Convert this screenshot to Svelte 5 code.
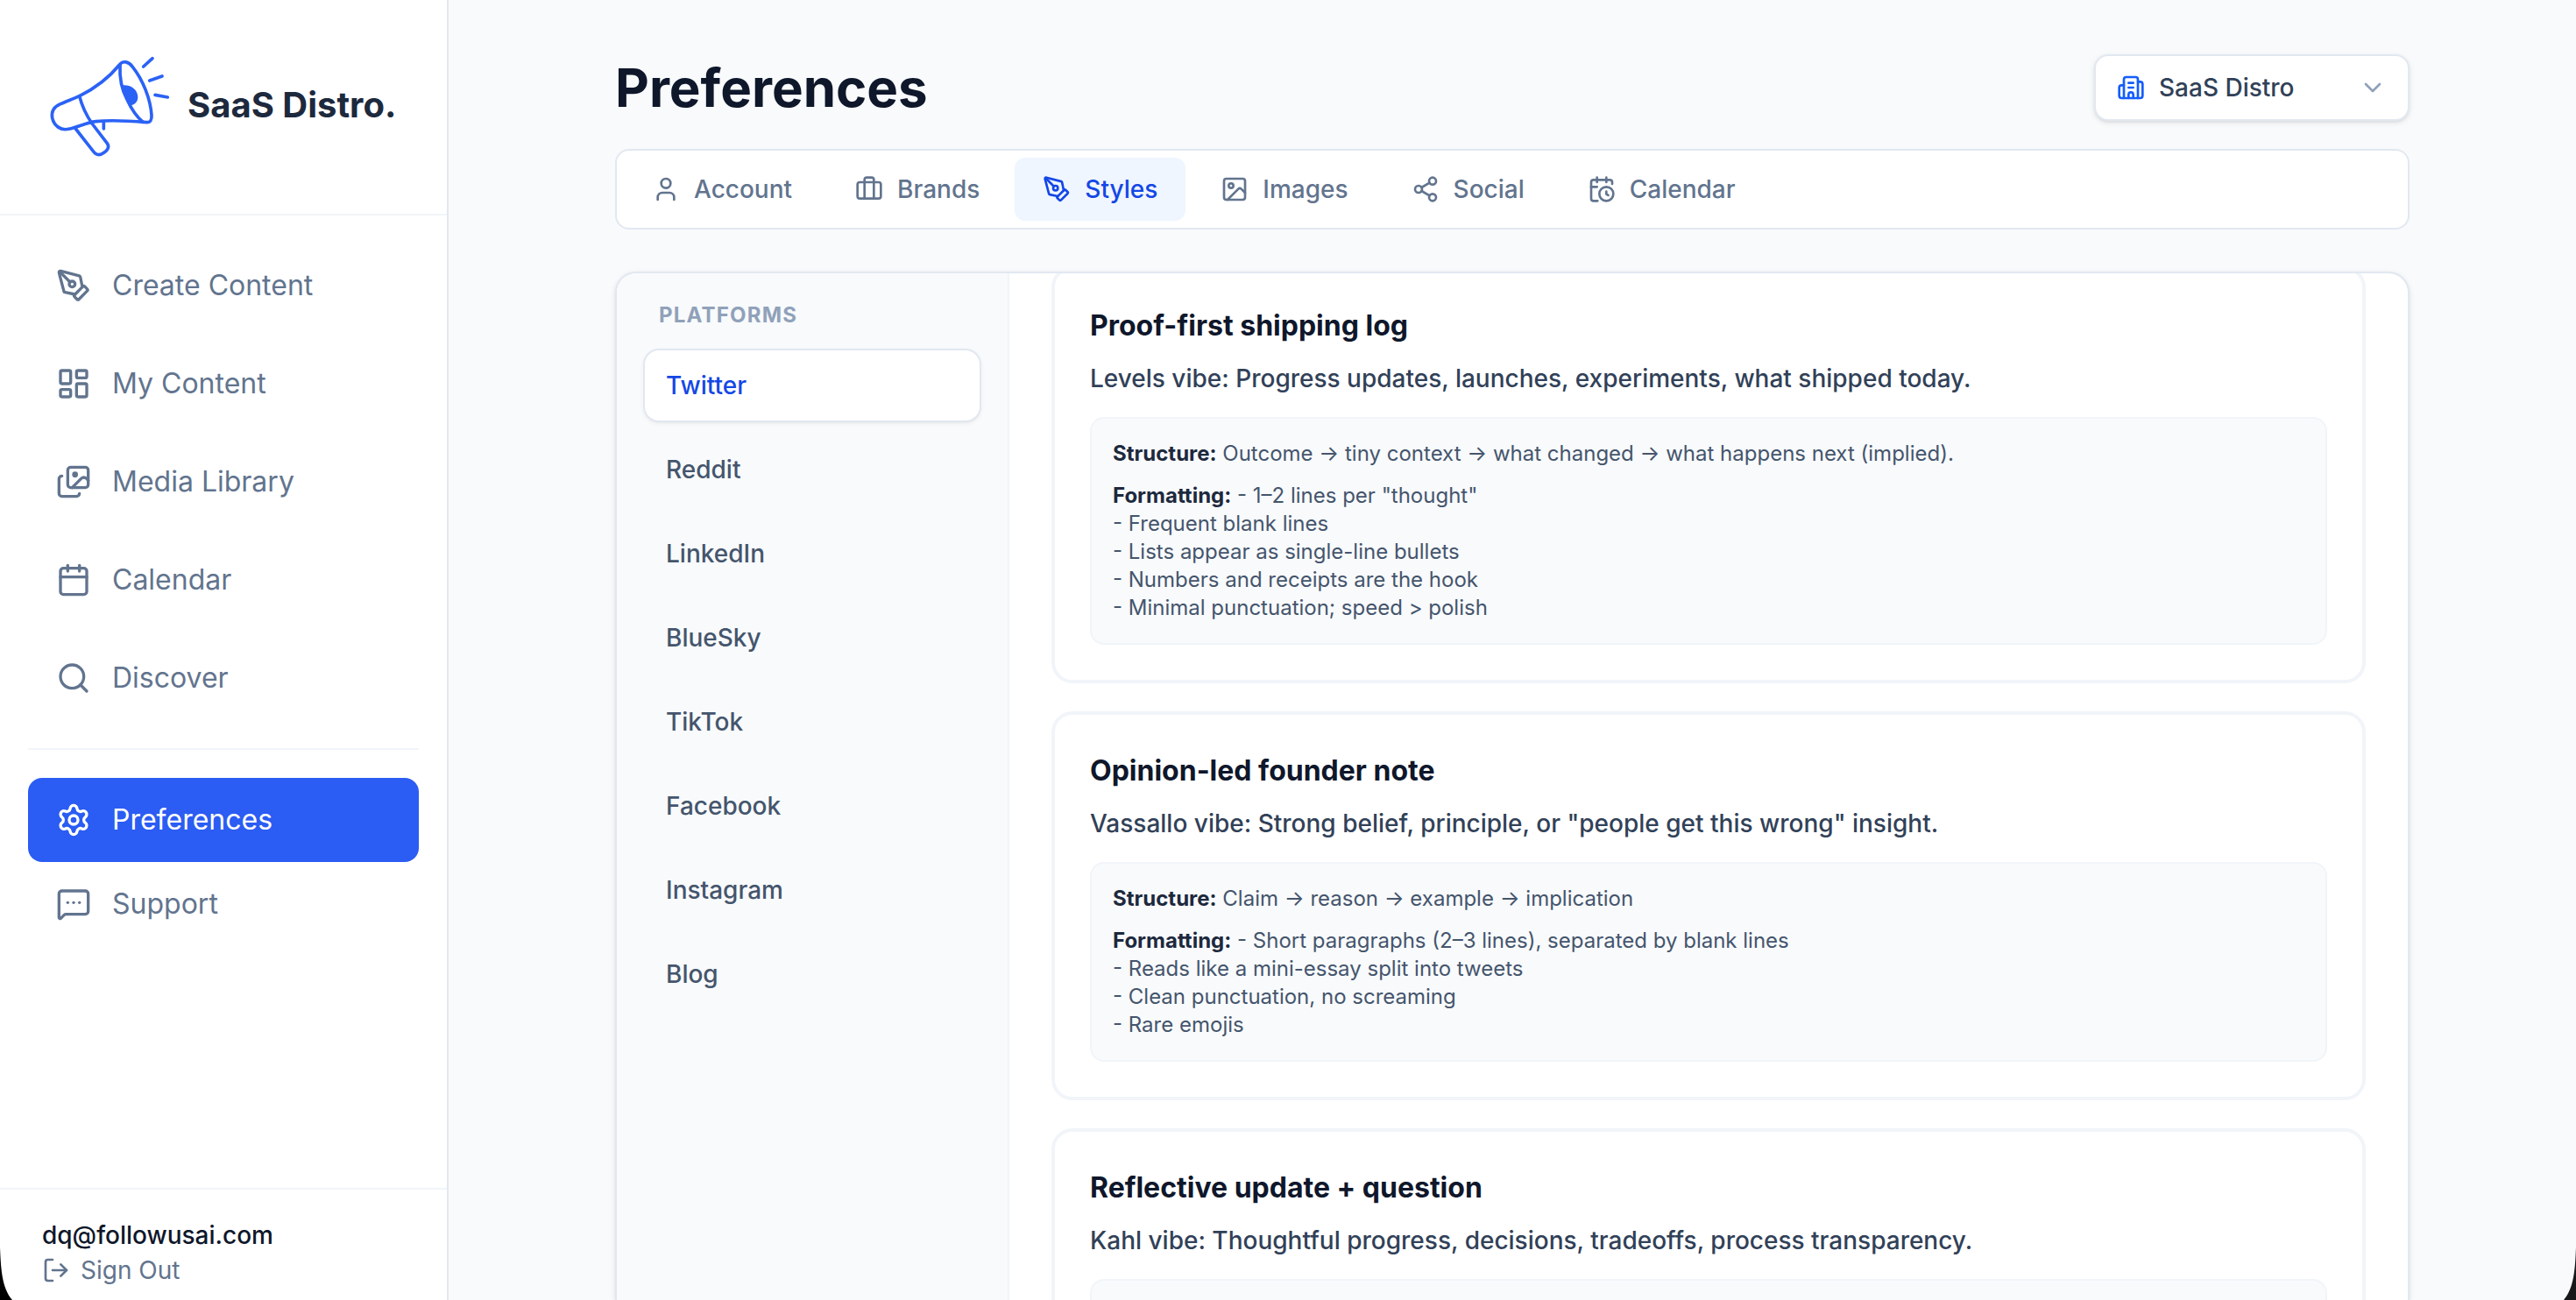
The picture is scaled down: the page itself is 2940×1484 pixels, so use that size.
<script>
    import { onMount } from 'svelte';

    const icons = {
        pen: '<path d="M15.707 21.293a1 1 0 0 1-1.414 0l-1.586-1.586a1 1 0 0 1 0-1.414l5.586-5.586a1 1 0 0 1 1.414 0l1.586 1.586a1 1 0 0 1 0 1.414z"/><path d="m18 13-1.375-6.874a1 1 0 0 0-.746-.776L3.235 2.028a1 1 0 0 0-1.207 1.207L5.35 15.879a1 1 0 0 0 .776.746L13 18"/><path d="m2.3 2.3 7.286 7.286"/><circle cx="11" cy="11" r="2"/>',
        dashboard: '<rect width="7" height="9" x="3" y="3" rx="1"/><rect width="7" height="5" x="14" y="3" rx="1"/><rect width="7" height="9" x="14" y="12" rx="1"/><rect width="7" height="5" x="3" y="16" rx="1"/>',
        images: '<path d="m22 11-1.296-1.296a2.4 2.4 0 0 0-3.408 0L11 16"/><path d="M4 8a2 2 0 0 0-2 2v10a2 2 0 0 0 2 2h10a2 2 0 0 0 2-2"/><circle cx="13" cy="7" r="1" fill="currentColor"/><rect x="8" y="2" width="14" height="14" rx="2"/>',
        calendar: '<path d="M8 2v4"/><path d="M16 2v4"/><rect width="18" height="18" x="3" y="4" rx="2"/><path d="M3 10h18"/>',
        search: '<path d="m21 21-4.34-4.34"/><circle cx="11" cy="11" r="8"/>',
        settings: '<path d="M9.671 4.136a2.34 2.34 0 0 1 4.659 0 2.34 2.34 0 0 0 3.319 1.915 2.34 2.34 0 0 1 2.33 4.033 2.34 2.34 0 0 0 0 3.831 2.34 2.34 0 0 1-2.33 4.033 2.34 2.34 0 0 0-3.319 1.915 2.34 2.34 0 0 1-4.659 0 2.34 2.34 0 0 0-3.32-1.915 2.34 2.34 0 0 1-2.33-4.033 2.34 2.34 0 0 0 0-3.831A2.34 2.34 0 0 1 6.35 6.051a2.34 2.34 0 0 0 3.319-1.915"/><circle cx="12" cy="12" r="3"/>',
        message: '<path d="M22 17a2 2 0 0 1-2 2H6.828a2 2 0 0 0-1.414.586l-2.202 2.202A.71.71 0 0 1 2 21.286V5a2 2 0 0 1 2-2h16a2 2 0 0 1 2 2z"/><path d="M12 11h.01"/><path d="M16 11h.01"/><path d="M8 11h.01"/>',
        logout: '<path d="m16 17 5-5-5-5"/><path d="M21 12H9"/><path d="M9 21H5a2 2 0 0 1-2-2V5a2 2 0 0 1 2-2h4"/>',
        user: '<path d="M19 21v-2a4 4 0 0 0-4-4H9a4 4 0 0 0-4 4v2"/><circle cx="12" cy="7" r="4"/>',
        briefcase: '<path d="M16 20V4a2 2 0 0 0-2-2h-4a2 2 0 0 0-2 2v16"/><rect width="20" height="14" x="2" y="6" rx="2"/>',
        image: '<rect width="18" height="18" x="3" y="3" rx="2"/><circle cx="9" cy="9" r="2"/><path d="m21 15-3.086-3.086a2 2 0 0 0-2.828 0L6 21"/>',
        share: '<circle cx="18" cy="5" r="3"/><circle cx="6" cy="12" r="3"/><circle cx="18" cy="19" r="3"/><path d="m8.59 13.51 6.83 3.98"/><path d="m15.41 6.51-6.82 3.98"/>',
        calendarClock: '<path d="M16 14v2.2l1.6 1"/><path d="M16 2v4"/><path d="M21 7.5V6a2 2 0 0 0-2-2H5a2 2 0 0 0-2 2v14a2 2 0 0 0 2 2h3.5"/><path d="M3 10h5"/><path d="M8 2v4"/><circle cx="16" cy="16" r="6"/>',
        building: '<path d="M10 12h4"/><path d="M10 8h4"/><path d="M14 21v-3a2 2 0 0 0-4 0v3"/><path d="M6 10H4a2 2 0 0 0-2 2v7a2 2 0 0 0 2 2h16a2 2 0 0 0 2-2V9a2 2 0 0 0-2-2h-2"/><path d="M6 21V5a2 2 0 0 1 2-2h8a2 2 0 0 1 2 2v16"/>',
        chevron: '<path d="m6 9 6 6 6-6"/>'
    };

    const mainNav = [
        { label: 'Create Content', icon: 'pen', href: '#create' },
        { label: 'My Content', icon: 'dashboard', href: '#content' },
        { label: 'Media Library', icon: 'images', href: '#media' },
        { label: 'Calendar', icon: 'calendar', href: '#calendar' },
        { label: 'Discover', icon: 'search', href: '#discover' }
    ];

    const bottomNav = [
        { label: 'Preferences', icon: 'settings', href: '#preferences' },
        { label: 'Support', icon: 'message', href: '#support' }
    ];

    const tabs = [
        { label: 'Account', icon: 'user' },
        { label: 'Brands', icon: 'briefcase' },
        { label: 'Styles', icon: 'pen' },
        { label: 'Images', icon: 'image' },
        { label: 'Social', icon: 'share' },
        { label: 'Calendar', icon: 'calendarClock' }
    ];

    const platforms = ['Twitter', 'Reddit', 'LinkedIn', 'BlueSky', 'TikTok', 'Facebook', 'Instagram', 'Blog'];

    const styles = [
        {
            title: 'Proof-first shipping log',
            description: 'Levels vibe: Progress updates, launches, experiments, what shipped today.',
            structure: 'Outcome → tiny context → what changed → what happens next (implied).',
            formatting: [
                '1–2 lines per "thought"',
                'Frequent blank lines',
                'Lists appear as single-line bullets',
                'Numbers and receipts are the hook',
                'Minimal punctuation; speed > polish'
            ]
        },
        {
            title: 'Opinion-led founder note',
            description: 'Vassallo vibe: Strong belief, principle, or "people get this wrong" insight.',
            structure: 'Claim → reason → example → implication',
            formatting: [
                'Short paragraphs (2–3 lines), separated by blank lines',
                'Reads like a mini-essay split into tweets',
                'Clean punctuation, no screaming',
                'Rare emojis'
            ]
        },
        {
            title: 'Reflective update + question',
            description: 'Kahl vibe: Thoughtful progress, decisions, tradeoffs, process transparency.'
        }
    ];

    let activePage = $state('Preferences');
    let activeTab = $state('Styles');
    let activePlatform = $state('Twitter');
    let list;

    onMount(() => {
        list.scrollTop = 56;
    });
</script>

{#snippet icon(name)}
    <svg class="icon" viewBox="0 0 24 24" aria-hidden="true">{@html icons[name]}</svg>
{/snippet}

{#snippet navItem(item)}
    <a class="nav-item" class:active={activePage === item.label} href={item.href} onclick={() => activePage = item.label}>
        {@render icon(item.icon)}
        {item.label}
    </a>
{/snippet}

<div class="app">
    <aside class="sidebar">
        <div class="brand">
            <svg class="logo" viewBox="12 -12 480 444" aria-hidden="true">
                <path d="M140 179C122 187 96 197 75 206C52 216 43 232 47 254C53 281 76 298 103 292C138 284 164 270 196 266C250 260 310 264 370 269C383 270 388 260 387 244C383 190 358 124 322 79C309 61 289 56 277 72C237 121 190 154 140 179Z"/>
                <path d="M279 72C277 110 285 157 303 191C317 221 338 252 358 268"/>
                <path d="M140 179C149 215 163 244 183 273L235 341C243 352 238 363 225 372C209 384 197 381 188 369L127 291"/>
                <path d="M223 268V291M359 78L390 50M380 126L423 111M399 175L442 183"/>
                <path class="solid" d="M285 143C309 138 332 152 338 171C344 190 336 206 317 211C302 194 291 169 285 143Z"/>
            </svg>
            <span>SaaS Distro.</span>
        </div>

        <nav class="nav">
            <div class="nav-main">
                {#each mainNav as item}
                    {@render navItem(item)}
                {/each}
            </div>
            <div class="nav-bottom">
                {#each bottomNav as item}
                    {@render navItem(item)}
                {/each}
            </div>
        </nav>

        <div class="account">
            <p>dq@followusai.com</p>
            <button type="button" class="sign-out">
                {@render icon('logout')}
                Sign Out
            </button>
        </div>
    </aside>

    <main class="main">
        <div class="container">
            <header class="header">
                <h1>Preferences</h1>
                <div class="brand-select">
                    {@render icon('building')}
                    <select aria-label="Brand">
                        <option>SaaS Distro</option>
                    </select>
                    {@render icon('chevron')}
                </div>
            </header>

            <div class="tabs">
                {#each tabs as tab}
                    <button type="button" class="tab" class:active={activeTab === tab.label} onclick={() => activeTab = tab.label}>
                        {@render icon(tab.icon)}
                        {tab.label}
                    </button>
                {/each}
            </div>

            <section class="panel">
                <div class="platforms">
                    <h2>PLATFORMS</h2>
                    {#each platforms as platform}
                        <button type="button" class="platform" class:active={activePlatform === platform} onclick={() => activePlatform = platform}>
                            {platform}
                        </button>
                    {/each}
                </div>

                <div class="style-list" bind:this={list}>
                    {#each styles as style}
                        <article class="card">
                            <h3>{style.title}</h3>
                            <p class="description">{style.description}</p>
                            <div class="rules">
                                {#if style.structure}
                                    <p><strong>Structure:</strong> {style.structure}</p>
                                    <div>
                                        <p><strong>Formatting:</strong> - {style.formatting[0]}</p>
                                        {#each style.formatting.slice(1) as line}
                                            <p>- {line}</p>
                                        {/each}
                                    </div>
                                {/if}
                            </div>
                        </article>
                    {/each}
                </div>
            </section>
        </div>
    </main>

    <!-- Rounded window corners -->
    <svg class="corner left" viewBox="0 0 14 60" aria-hidden="true"><path d="M0 0C1 24 2 46 14 60H0Z"/></svg>
    <svg class="corner right" viewBox="0 0 14 60" aria-hidden="true"><path d="M0 0C1 24 2 46 14 60H0Z"/></svg>
</div>

<style>
    :global(body) {
        margin: 0;
        background: #f8fafc;
    }

    .app {
        position: relative;
        display: flex;
        height: 100vh;
        overflow: hidden;
        background: #f8fafc;
        color: #0f172b;
        font-family: Inter, "Liberation Sans", sans-serif;
        font-size: 28px;
        line-height: 40px;
    }

    .app * {
        box-sizing: border-box;
    }

    h1, h2, h3, p {
        margin: 0;
    }

    button, select {
        padding: 0;
        border: none;
        background: none;
        color: inherit;
        font: inherit;
        cursor: pointer;
    }

    .icon {
        flex: none;
        width: 32px;
        height: 32px;
        fill: none;
        stroke: currentColor;
        stroke-width: 2;
        stroke-linecap: round;
        stroke-linejoin: round;
    }

    .sidebar {
        display: flex;
        flex-direction: column;
        flex: none;
        width: 512px;
        background: #fff;
        border-right: 2px solid #e2e8f0;
    }

    .brand {
        display: flex;
        align-items: center;
        gap: 6px;
        padding: 46px 48px 50px;
        border-bottom: 2px solid #f1f5f9;
        color: #1d293d;
        font-size: 40px;
        font-weight: 700;
        line-height: 56px;
        white-space: nowrap;
    }

    .logo {
        flex: none;
        width: 160px;
        height: 148px;
        fill: none;
        stroke: #2b62f6;
        stroke-width: 11;
        stroke-linecap: round;
        stroke-linejoin: round;
    }

    .logo .solid {
        fill: #2b62f6;
        stroke: none;
    }

    .nav {
        flex: 1;
        padding: 32px;
    }

    .nav-main {
        display: flex;
        flex-direction: column;
        gap: 16px;
        padding-bottom: 32px;
    }

    .nav-bottom {
        padding-top: 32px;
        border-top: 2px solid #f1f5f9;
    }

    .nav-item {
        display: flex;
        align-items: center;
        gap: 24px;
        padding: 24px 32px;
        border-radius: 16px;
        color: #62748e;
        font-size: 32px;
        line-height: 48px;
        text-decoration: none;
    }

    .nav-item .icon {
        width: 40px;
        height: 40px;
    }

    .nav-item.active {
        background: #2b5cf3;
        color: #fff;
    }

    .account {
        padding: 32px 48px 14px;
        border-top: 2px solid #f1f5f9;
    }

    .account p {
        font-weight: 500;
    }

    .sign-out {
        display: flex;
        align-items: center;
        gap: 12px;
        color: #62748e;
    }

    .main {
        flex: 1;
        min-width: 0;
        padding: 56px 64px 0;
    }

    .container {
        display: flex;
        flex-direction: column;
        height: 100%;
        max-width: 2048px;
        margin: 0 auto;
    }

    .header {
        display: flex;
        align-items: center;
        justify-content: space-between;
        padding-bottom: 26px;
    }

    h1 {
        font-size: 60px;
        font-weight: 700;
        line-height: 88px;
    }

    .brand-select {
        display: flex;
        align-items: center;
        gap: 16px;
        width: 360px;
        padding: 16px 24px;
        background: #fff;
        border: 2px solid #e2e8f0;
        border-radius: 16px;
        box-shadow: 0 2px 6px rgba(0, 0, 0, 0.1), 0 2px 4px -2px rgba(0, 0, 0, 0.1);
        color: #155dfc;
    }

    .brand-select select {
        flex: 1;
        min-width: 0;
        height: 40px;
        appearance: none;
        color: #314158;
        font-weight: 500;
    }

    .brand-select .icon:last-child {
        color: #90a1b9;
    }

    .tabs {
        display: flex;
        gap: 8px;
        margin-bottom: 48px;
        padding: 8px;
        background: #fff;
        border: 2px solid #e2e8f0;
        border-radius: 16px;
    }

    .tab {
        display: flex;
        align-items: center;
        gap: 16px;
        padding: 16px 32px;
        border-radius: 12px;
        color: #62748e;
        font-weight: 500;
    }

    .tab.active {
        background: #eff6ff;
        color: #1447e6;
    }

    .panel {
        display: flex;
        flex: 1;
        min-height: 0;
        overflow: hidden;
        background: #fff;
        border: 2px solid #e2e8f0;
        border-bottom: none;
        border-radius: 24px 24px 0 0;
        box-shadow: 0 2px 6px rgba(0, 0, 0, 0.1), 0 2px 4px -2px rgba(0, 0, 0, 0.1);
    }

    .platforms {
        display: flex;
        flex-direction: column;
        flex: none;
        gap: 16px;
        width: 448px;
        padding: 32px;
        background: #f8fafc;
        border-right: 2px solid #f1f5f9;
    }

    h2 {
        padding: 0 16px 8px;
        color: #90a1b9;
        font-size: 24px;
        font-weight: 700;
        letter-spacing: 0.05em;
        line-height: 32px;
    }

    .platform {
        padding: 20px 24px;
        border-radius: 16px;
        color: #45556c;
        font-weight: 500;
        text-align: left;
    }

    .platform.active {
        background: #fff;
        box-shadow: 0 0 0 2px #e2e8f0, 0 2px 6px rgba(0, 0, 0, 0.1), 0 2px 4px -2px rgba(0, 0, 0, 0.1);
        color: #1447e6;
    }

    .style-list {
        display: flex;
        flex-direction: column;
        flex: 1;
        gap: 32px;
        min-width: 0;
        padding: 48px;
        overflow-y: auto;
        scrollbar-width: none;
    }

    .card {
        flex: none;
        padding: 40px;
        border: 4px solid #f1f5f9;
        border-radius: 24px;
    }

    h3 {
        font-size: 32px;
        font-weight: 700;
        line-height: 48px;
    }

    .description {
        margin: 16px 0 24px;
        color: #314158;
        font-weight: 500;
    }

    .rules {
        display: flex;
        flex-direction: column;
        gap: 16px;
        min-height: 228px;
        padding: 24px;
        background: #f8fafc;
        border: 2px solid #f1f5f9;
        border-radius: 16px;
        color: #45556c;
        font-size: 24px;
        line-height: 32px;
    }

    .rules strong {
        color: #1d293d;
        font-weight: 700;
    }

    .corner {
        position: absolute;
        bottom: 0;
        left: 0;
        width: 14px;
        height: 60px;
        fill: #000;
        pointer-events: none;
    }

    .corner.right {
        left: auto;
        right: 0;
        transform: scaleX(-1);
        fill: #18181a;
    }
</style>
